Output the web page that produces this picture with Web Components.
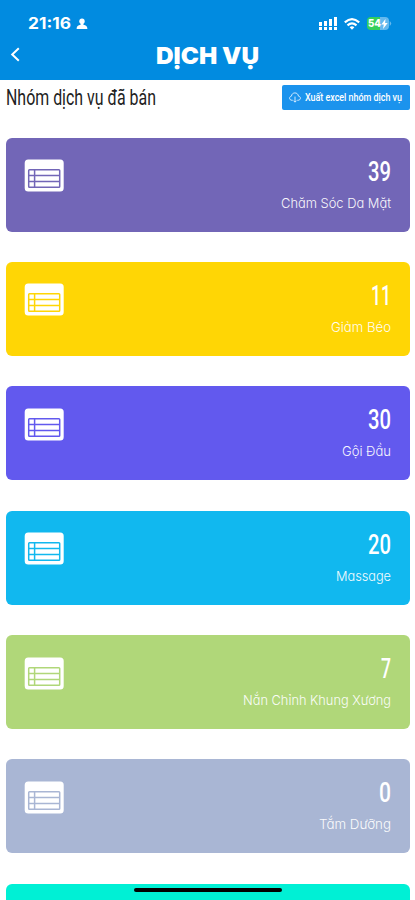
<!DOCTYPE html>
<html lang="vi"><head><meta charset="utf-8"><title>Dịch vụ</title>
<style>
html,body{margin:0;height:900px;overflow:hidden;background:#fff}
body{font-family:Roboto,"Open Sans",sans-serif}
</style></head><body>
<service-app></service-app>
<script>
const define=(name,html,init)=>customElements.define(name,class extends HTMLElement{
  connectedCallback(){
    if(this.shadowRoot)return;
    const t=document.createElement('template');t.innerHTML=html;
    this.attachShadow({mode:'open'}).append(t.content.cloneNode(true));
    if(init)init(this,this.shadowRoot);
  }
});

/* One line of text condensed or widened to an exact width */
define('fit-text',`<style>
:host{display:block;flex:none;white-space:nowrap}
span{display:inline-block;transform-origin:0 50%;white-space:nowrap}
</style><span><slot></slot></span>`,(el,root)=>{
  const w=+el.getAttribute('w'),s=root.querySelector('span');
  el.style.width=w+'px';
  s.style.transform='scaleX('+w/s.getBoundingClientRect().width+')';
});

define('status-bar',`<style>
:host{display:flex;height:46px;box-sizing:border-box;padding:14px 22px 13px 28px;align-items:center;color:#fff}
fit-text{font:700 15.5px/19px Inter,sans-serif}
svg{display:block;flex:none}
.person{margin-left:5px}.sig{margin-left:auto}.wifi{margin-left:7px}
.bat{margin-left:7px;width:26px;height:14px;display:flex;align-items:center}
.cell{width:22px;height:13px;box-sizing:border-box;border-radius:4px;background:linear-gradient(90deg,#35cf5b 57%,#65b9ee 57%);display:flex;align-items:center;padding-left:1px}
.cell fit-text{font:800 11px/13px Inter,sans-serif}
</style>
<fit-text w="43">21:16</fit-text>
<svg class="person" width="12" height="12" viewBox="0 0 12 12" fill="#fff"><circle cx="6" cy="3.2" r="2.700"/><path d="M4.600 5h2.800v1.800c2.600.3 4 1.400 4 4.200H.6c0-2.800 1.400-3.900 4-4.200z"/></svg>
<svg class="sig" width="18" height="13" viewBox="0 0 18 13" fill="#fff"><path d="M0 5h3v4H0zM5 4h3v5H5zM10 2h3v7h-3zM15 0h3v9h-3zM0 10h3v3H0zM5 10h3v3H5zM10 10h3v3h-3zM15 10h3v3h-3z"/></svg>
<svg class="wifi" width="16" height="12" viewBox="0 0 16 12" fill="none" stroke="#fff" stroke-width="2.2"><path d="M.8 4.4Q8-2 15.2 4.4M3.5 7.3q4.5-3.8 9 0"/><path d="M5.6 9.3q2.4-2 4.8 0L8 11.7z" fill="#fff" stroke="none"/></svg>
<div class="bat"><div class="cell"><fit-text w="13">54</fit-text><svg width="7" height="10" viewBox="0 0 7 10" fill="#fff"><path d="M4.5 0L.3 5.6h2.5L2 10l4.7-6H4.1z"/></svg></div><svg width="3" height="5" viewBox="0 0 3 5"><path d="M.7 0q3 2.5 0 5z" fill="#65b9ee"/></svg></div>`);

define('title-bar',`<style>
:host{display:grid;grid-template-columns:156px 103px 1fr;height:34px;align-items:start;color:#fff}
svg{margin:1px 0 0 10px;display:block}
fit-text{font:900 23.5px/20px Inter,sans-serif}
</style>
<svg width="11" height="15" viewBox="0 0 11 15" fill="none" stroke="#fff" stroke-width="2"><path d="M8.800 1.200L2.200 7.500l6.600 6.300"/></svg>
<fit-text w="103"><slot></slot></fit-text>`);

define('export-button',`<style>
:host{display:flex;width:128px;height:25px;box-sizing:border-box;padding-left:7px;gap:4px;align-items:center;background:#1b93ed;border-radius:2px;color:#fff}
fit-text{font:500 11.5px/16px Roboto,sans-serif}
</style>
<svg width="12" height="11" viewBox="0 0 13 12" fill="none" stroke="#e2f2ff" stroke-width="1"><path d="M4 9H3.200C1.600 9 .6 8 .6 6.700.6 5.500 1.500 4.700 2.600 4.500 2.900 2.300 4.400 1 6.400 1s3.500 1.300 3.900 3.500c1.200.2 2.100 1 2.100 2.200 0 1.300-1 2.300-2.500 2.300H9M6.500 5v6M4.800 9.400l1.700 1.700 1.700-1.700"/></svg>
<fit-text w="97"><slot></slot></fit-text>`);

define('section-head',`<style>
:host{display:flex;height:58px;box-sizing:border-box;padding:5px 5px 0 6px;justify-content:space-between;align-items:flex-start;color:#222}
fit-text{font:400 21.500px/26px Roboto,sans-serif}
</style><fit-text w="150"><slot></slot></fit-text><export-button>Xuất excel nhóm dịch vụ</export-button>`);

define('service-card',`<style>
:host{display:flex;box-sizing:border-box;height:94px;flex:none;border-radius:6px;padding:21px 19px 0 18px;justify-content:space-between;align-items:flex-start;color:#fff;background:var(--tone)}
svg{display:block;margin-top:.5px}
.info{display:flex;flex-direction:column;align-items:flex-end}
.num{font:500 27px/26px Roboto,sans-serif}
.label{margin-top:9px;font:300 13.400px/18px Inter,sans-serif;font-feature-settings:"cv11";opacity:.95}
</style>
<svg width="41" height="33" viewBox="0 0 41 33"><rect x=".7" y=".5" width="39" height="32" rx="3.500" fill="#fff"/><g fill="none" stroke="var(--tone)" stroke-width="1.500"><rect x="4.700" y="10.700" width="31" height="17.600" rx=".8"/><path d="M10.600 10.700v17.600M4.700 16.600h31M4.700 22.500h31"/></g></svg>
<div class="info"></div>`,(el,root)=>{
  el.style.setProperty('--tone',el.getAttribute('tone'));
  const info=root.querySelector('.info');
  for(const [cls,key,width] of [['num','count','nw'],['label','label','lw']]){
    if(!el.hasAttribute(key))continue;
    const f=document.createElement('fit-text');
    f.className=cls;f.setAttribute('w',el.getAttribute(width));f.textContent=el.getAttribute(key);info.append(f);
  }
  if(!el.hasAttribute('count'))root.querySelector('svg').remove();
});

define('service-app',`<style>
:host{display:block;position:relative;width:415px;height:900px;overflow:hidden;background:#fff}
header{background:#018be0;height:79.500px}
main{display:flex;flex-direction:column;gap:30.400px;padding:0 5px 0 6px}
.home{position:absolute;left:134px;top:888px;width:148px;height:4px;border-radius:2px;background:#000}
</style>
<header><status-bar></status-bar><title-bar>DỊCH VỤ</title-bar></header>
<section-head>Nhóm dịch vụ đã bán</section-head>
<main>
<service-card tone="#7266b7" count="39" nw="23" label="Chăm Sóc Da Mặt" lw="110"></service-card>
<service-card tone="#ffd605" count="11" nw="20" label="Giảm Béo" lw="60"></service-card>
<service-card tone="#6259ee" count="30" nw="23" label="Gội Đầu" lw="49"></service-card>
<service-card tone="#11b8ef" count="20" nw="23" label="Massage" lw="55"></service-card>
<service-card tone="#b0d779" count="7" nw="10" label="Nắn Chỉnh Khung Xương" lw="148"></service-card>
<service-card tone="#a9b6d4" count="0" nw="12" label="Tắm Dưỡng" lw="72"></service-card>
<service-card tone="#00f0d5"></service-card>
</main><div class="home"></div>`);
</script></body></html>
